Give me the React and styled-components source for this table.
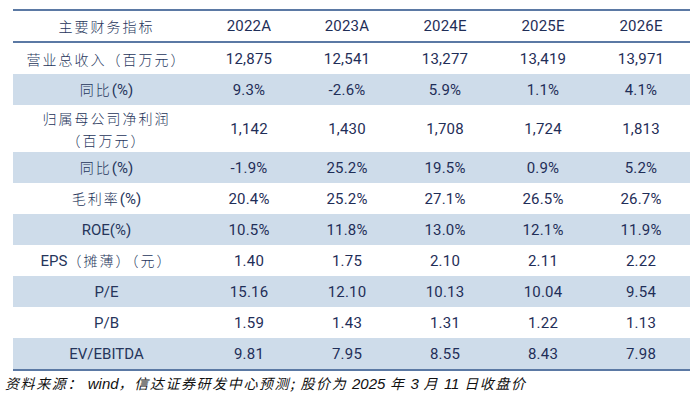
import React from 'react';
import styled, { createGlobalStyle } from 'styled-components';

const GlobalStyle = createGlobalStyle`
  body {
    margin: 0;
    background: #fff;
  }
`;

const rows = [
  { label: '营业总收入（百万元）', values: ['12,875', '12,541', '13,277', '13,419', '13,971'] },
  { label: '同比(%)', values: ['9.3%', '-2.6%', '5.9%', '1.1%', '4.1%'], shaded: true },
  { label: '归属母公司净利润', sub: '（百万元）', values: ['1,142', '1,430', '1,708', '1,724', '1,813'] },
  { label: '同比(%)', values: ['-1.9%', '25.2%', '19.5%', '0.9%', '5.2%'], shaded: true },
  { label: '毛利率(%)', values: ['20.4%', '25.2%', '27.1%', '26.5%', '26.7%'] },
  { label: 'ROE(%)', values: ['10.5%', '11.8%', '13.0%', '12.1%', '11.9%'], shaded: true },
  { label: 'EPS（摊薄）（元）', values: ['1.40', '1.75', '2.10', '2.11', '2.22'] },
  { label: 'P/E', values: ['15.16', '12.10', '10.13', '10.04', '9.54'], shaded: true },
  { label: 'P/B', values: ['1.59', '1.43', '1.31', '1.22', '1.13'] },
  { label: 'EV/EBITDA', values: ['9.81', '7.95', '8.55', '8.43', '7.98'], shaded: true },
];

const years = ['2022A', '2023A', '2024E', '2025E', '2026E'];

const Page = styled.div`
  width: 700px;
  height: 400px;
  padding-top: 9px;
  box-sizing: border-box;
  overflow: hidden;
`;

const Table = styled.div`
  margin-left: 13px;
  width: 677px;
  border-top: 2px solid #5b79a4;
  border-bottom: 2px solid #5b79a4;
`;

const Row = styled.div`
  display: grid;
  grid-template-columns: 187px repeat(5, 98px);
  height: ${(p) => p.$height || 31}px;
  background: ${(p) => (p.$shaded ? '#cedcea' : '#fff')};
  border-bottom: ${(p) => (p.$head ? '2px solid #5b79a4' : 'none')};
  align-items: center;
`;

const Label = styled.div`
  text-align: center;
  font-family: 'Noto Sans CJK SC', Roboto, sans-serif;
  font-weight: 300;
  font-size: 14px;
  letter-spacing: 2px;
  line-height: 22px;
  color: #26355b;
`;

const Latin = styled.span`
  font-family: Roboto, 'Noto Sans CJK SC', sans-serif;
  font-weight: 400;
  font-size: 15px;
  letter-spacing: 0;
`;

const Cell = styled.div`
  text-align: center;
  font-family: Roboto, sans-serif;
  font-size: 15px;
  color: #1f2e58;
  letter-spacing: 0.2px;
`;

const Note = styled.div`
  margin: 2px 0 0 5px;
  font-family: 'Noto Sans CJK SC', sans-serif;
  font-style: italic;
  font-size: 14px;
  color: #111;
  letter-spacing: 1.6px;
  white-space: nowrap;
`;

const NoteLatin = styled.span`
  font-family: 'Liberation Sans', Arial, sans-serif;
  font-size: 15px;
  letter-spacing: 0;
`;

// split a label so the latin bits (ROE, P/E, (%)) use Roboto
const renderLabel = (text) =>
  text.split(/([A-Za-z/()%]+)/).map((part, i) =>
    /[A-Za-z/()%]/.test(part) ? <Latin key={i}>{part}</Latin> : part
  );

export default function App() {
  return (
    <Page>
      <GlobalStyle />
      <Table>
        <Row $head $height={30}>
          <Label>主要财务指标</Label>
          {years.map((y) => (
            <Cell key={y}>{y}</Cell>
          ))}
        </Row>
        {rows.map((r, i) => (
          <Row key={i} $shaded={r.shaded} $height={r.sub ? 47 : 31}>
            <Label>
              {renderLabel(r.label)}
              {r.sub && <div>{r.sub}</div>}
            </Label>
            {r.values.map((v, j) => (
              <Cell key={j}>{v}</Cell>
            ))}
          </Row>
        ))}
      </Table>
      <Note>
        资料来源： <NoteLatin>wind</NoteLatin>，信达证券研发中心预测; 股价为 <NoteLatin>2025</NoteLatin> 年{' '}
        <NoteLatin>3</NoteLatin> 月 <NoteLatin>11</NoteLatin> 日收盘价
      </Note>
    </Page>
  );
}
